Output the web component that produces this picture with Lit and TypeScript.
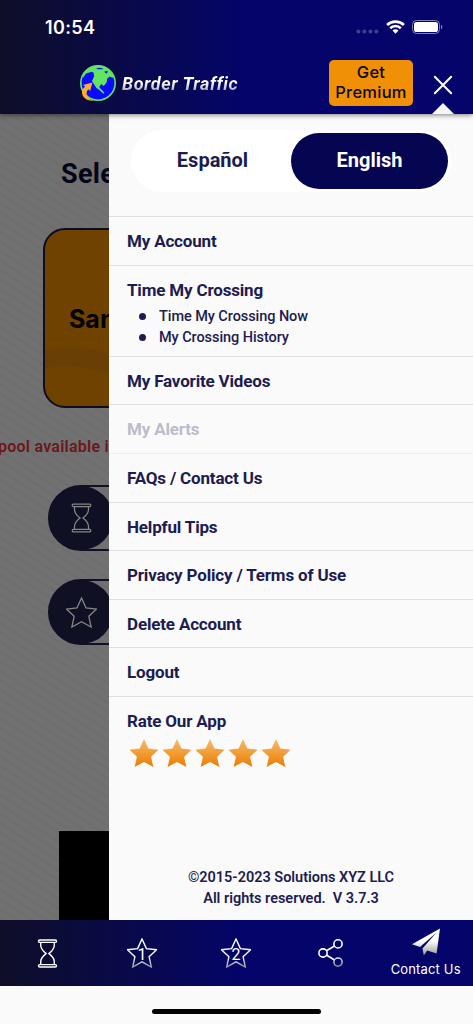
import { LitElement, html, css, svg } from "lit";
import { customElement } from "lit/decorators.js";
import { classMap } from "lit/directives/class-map.js";

const STAR = "M15 1 L19.4 10.6 L29.6 11.7 L22.1 18.7 L24.3 29 L15 23.9 L5.7 29 L7.9 18.7 L.4 11.7 L10.6 10.6 Z";

const hourglass = svg`
  <rect x="1" y="1" width="18" height="2.4" rx="1.2"></rect>
  <rect x="1" y="25.6" width="18" height="2.4" rx="1.2"></rect>
  <path d="M3.2 3.6V6C3.2 10.5 6 12.4 8.6 14.5C6 16.6 3.2 18.6 3.2 23V25.4M16.8 3.6V6C16.8 10.5 14 12.4 11.4 14.5C14 16.6 16.8 18.6 16.8 23V25.4"></path>`;

interface Entry { label: string; sub?: string[]; off?: boolean; }

const ENTRIES: Entry[] = [
  { label: "My Account" },
  { label: "Time My Crossing", sub: ["Time My Crossing Now", "My Crossing History"] },
  { label: "My Favorite Videos" },
  { label: "My Alerts", off: true },
  { label: "FAQs / Contact Us" },
  { label: "Helpful Tips" },
  { label: "Privacy Policy / Terms of Use" },
  { label: "Delete Account" },
  { label: "Logout" },
];

@customElement("app-header")
class AppHeader extends LitElement {
  static styles = css`
    :host { display: block; height: 114px; position: relative; z-index: 3; color: #fff;
      background: linear-gradient(90deg, #0e0e28 0, #04046a 245px);
      box-shadow: 0 1px 5px rgba(0,0,0,.5); }
    .status { display: flex; justify-content: space-between; height: 54px; padding: 0 30px 0 45px; }
    .time { font: 600 18px/55px Inter, sans-serif; letter-spacing: .35px; }
    .signals { display: flex; align-items: center; }
    .dots { margin: 9px 7px 0 0; }
    .wifi { margin-right: 7px; }
    .bar { display: flex; align-items: center; height: 60px; padding-left: 79px; }
    .globe { flex: none; margin: -2px 6px 0 0; }
    .brand { width: 207px; font: italic 700 18px/24px Roboto, sans-serif; letter-spacing: .53px; white-space: nowrap; }
    .brand span { background: linear-gradient(#fff 45%, #a9a9b4 85%); -webkit-background-clip: text; background-clip: text; color: transparent; padding-right: 3px; }
    .premium { flex: none; width: 84px; height: 46px; box-sizing: border-box; margin-top: -2px; padding: 0 0 1px; border: 0; border-radius: 5px; background: #f09006;
      color: #080808; font: 500 16.5px/19.5px Inter, sans-serif; letter-spacing: .25px; text-align: center; white-space: nowrap; }
    .actions { display: flex; align-items: center; height: 60px; }
    .close { position: relative; width: 24px; height: 60px; margin-left: 18px; flex: none; }
    .x { position: absolute; left: 2px; top: 21px; }
    .tip { position: absolute; left: 1px; bottom: 0; }
  `;
  render() {
    return html`
      <div class="status">
        <div class="time">10:54</div>
        <div class="signals">
          <svg class="dots" width="23" height="5" fill="#41418c"><circle cx="2.4" cy="2.5" r="2"/><circle cx="8.4" cy="2.5" r="2"/><circle cx="14.4" cy="2.5" r="2"/><circle cx="20.4" cy="2.5" r="2"/></svg>
          <svg class="wifi" width="19" height="14" viewBox="0 0 19 14" fill="none" stroke="#fff" stroke-width="2.6"><path d="M1.1 5A12.2 12.2 0 0 1 17.9 5M4.2 8.2A7.6 7.6 0 0 1 14.8 8.2"/><path d="M6.5 10.6A4.2 4.2 0 0 1 12.5 10.6L9.5 13.7Z" fill="#fff" stroke="none"/></svg>
          <svg width="31" height="14" viewBox="0 0 31 14"><rect x=".5" y=".5" width="27" height="13" rx="4" fill="none" stroke="#8080b4"/><rect x="2" y="2" width="24" height="10" rx="2.6" fill="#fff"/><path d="M29 4.8Q30.4 5.2 30.4 7T29 9.2Z" fill="#8080b4"/></svg>
        </div>
      </div>
      <div class="bar">
        <svg class="globe" width="37" height="38" viewBox="0 0 37 38">
          <circle cx="19" cy="19" r="17.2" fill="#0a0aff" stroke="#62e565" stroke-width="1.6"/>
          <path fill="#62e565" d="M4 14C4 8 9 3 14 2.2C20 1 26 2.5 30 5.5C33 8.5 35 12 34.5 14L30.5 12.5L28 15L27.8 18L24.8 22L22.2 20L20.2 23L21.6 24.8L23 26L25.5 29L24 29.6L20.5 26L17.5 24L15 20.2L13 17L15.2 12L14.4 8.5L12.8 7.8L7 9.5Z"/>
          <path fill="#0a0aff" d="M17 4.4L20 3.8L24 4.4V5.2L19 5.2ZM25.5 7.4L28.6 6.8L28.2 9.6L26.2 9Z"/>
          <path fill="#ffad27" d="M15 36.6C8 37.5 2.6 33 3 28C3.2 25.2 4.6 23.6 6.2 22.4L4 21L13.4 18.4L11.2 27L9.4 25.2C5.4 29 8.3 35.6 15 36.6Z"/>
        </svg>
        <div class="brand"><span>Border Traffic</span></div>
        <div class="actions">
          <button class="premium">Get<br>Premium</button>
          <div class="close">
            <svg class="x" width="20" height="20" viewBox="0 0 20 20" stroke="#fff" stroke-width="2" stroke-linecap="round"><path d="M1.8 1.8L18.2 18.2M18.2 1.8L1.8 18.2"/></svg>
            <svg class="tip" width="22" height="11"><path d="M0 11L11 0L22 11Z" fill="#f6f6f6"/></svg>
          </div>
        </div>
      </div>`;
  }
}

@customElement("crossing-page")
class CrossingPage extends LitElement {
  static styles = css`
    :host { display: block; overflow: hidden; width: 109px; height: 806px; color: #05051a;
      background: repeating-linear-gradient(213deg, #717171 0 4px, #6d6d6d 6px, #717171 8px); }
    .page { width: 473px; display: flex; flex-direction: column; }
    .title { margin: 43px 0 0 61px; font: 700 27px/34px Roboto, sans-serif; letter-spacing: .3px; }
    .card { margin: 37px 0 0 43px; width: 240px; height: 180px; box-sizing: border-box; border: 2px solid #0c0c26; border-radius: 22px; overflow: hidden; background: #6f4200; }
    .art { display: block; }
    .face { display: grid; }
    .face > * { grid-area: 1 / 1; }
    .name { padding: 73px 0 0 24px; font: 700 25px/32px Inter, sans-serif; color: #000; }
    .notice { margin: 29px 0 0 -2px; font: 600 16px/20px Roboto, sans-serif; letter-spacing: .25px; color: #6c171b; white-space: nowrap; }
    .pill { margin: 28px 0 0 48px; width: 300px; height: 66px; box-sizing: border-box; border: 2px solid #101025; border-radius: 33px; }
    .pill + .pill { margin-top: 28px; }
    .disc { width: 64px; height: 64px; margin: -1px; display: grid; place-items: center; border-radius: 50%; background: #101025; }
    .disc svg { fill: none; stroke: #858585; }
    .video { margin: 186px 0 0 59px; height: 90px; background: #000; }
  `;
  render() {
    return html`<div class="page">
      <div class="title">Select</div>
      <div class="card"><div class="face">
        <svg class="art" width="236" height="176"><path fill="#693f05" d="M0 120Q34 113 70 126Q95 137 120 160V178Q92 154 62 143Q28 132 0 138Z"/></svg>
        <div class="name">San Ysidro</div></div></div>
      <div class="notice">pool available in</div>
      <div class="pill"><div class="disc"><svg width="21" height="30" viewBox="0 0 20 29" stroke-width="1.2">${hourglass}</svg></div></div>
      <div class="pill"><div class="disc"><svg width="31" height="31" viewBox="0 0 30 30" stroke-width="1.3"><path d=${STAR}/></svg></div></div>
      <div class="video"></div>
    </div>`;
  }
}

@customElement("side-menu")
class SideMenu extends LitElement {
  static styles = css`
    :host { display: flex; flex-direction: column; box-sizing: border-box; height: 806px; background: #fafafa; color: #1c1c50; font-family: Roboto, sans-serif; }
    .lang { flex: none; display: grid; grid-template-columns: 1fr 157px; margin: 16px 22px 24px; height: 62px; box-sizing: border-box; padding: 3px; border-radius: 31px; background: #fff; font: 700 20px/54px Roboto, sans-serif; text-align: center; }
    .on { height: 56px; border-radius: 28px; background: #050552; color: #fff; }
    .row { flex: none; box-sizing: border-box; height: 48.65px; padding: 12px 0 0 18px; border-top: 1px solid #dedede; font: 700 17px/24px Roboto, sans-serif; letter-spacing: -.17px; white-space: nowrap; }
    .label { display: block; height: 24px; }
    .tall { height: 91px; }
    .off { color: #bcbccb; }
    .after { border-top-color: #eee; }
    .subs { margin: 4.5px 0 0; padding: 0 0 0 12px; list-style: none; font: 500 14.5px/21px Roboto, sans-serif; letter-spacing: -.07px; }
    .sub { display: flex; align-items: center; height: 21px; }
    .dot { width: 7px; height: 7px; border-radius: 50%; background: currentColor; margin-right: 13px; }
    .rate { height: auto; }
    .stars { display: flex; gap: 3px; margin: 5px 0 0 1.5px; }
    .legal { margin: auto 0 11px; text-align: center; font: 600 14.5px/21px Roboto, sans-serif; letter-spacing: -.02px; white-space: pre; }
  `;
  render() {
    return html`
      <div class="lang"><div>Español</div><div class="on">English</div></div>
      ${ENTRIES.map((e, i) => html`
        <div class=${classMap({ row: true, tall: !!e.sub, off: !!e.off, after: !!ENTRIES[i - 1]?.off })}>
          <span class="label">${e.label}</span>
          ${e.sub ? html`<ul class="subs">${e.sub.map((s) => html`<li class="sub"><span class="dot"></span><span>${s}</span></li>`)}</ul>` : null}
        </div>`)}
      <div class="row rate"><span class="label">Rate Our App</span>
        <div class="stars">${[0, 1, 2, 3, 4].map(() => html`<svg width="30" height="30" viewBox="0 0 30 30">
          <defs><linearGradient id="g" x2="0" y2="1"><stop offset=".05" stop-color="#f6b867"/><stop offset="1" stop-color="#ec7d00"/></linearGradient></defs>
          <path d=${STAR} fill="url(#g)"/></svg>`)}</div>
      </div>
      <div class="legal">©2015-2023 Solutions XYZ LLC
All rights reserved.  V 3.7.3</div>`;
  }
}

@customElement("tab-bar")
class TabBar extends LitElement {
  static styles = css`
    :host { display: grid; grid-template-columns: repeat(5, 1fr); height: 66px; background: linear-gradient(90deg, #0e0e28 0, #04046a 245px); }
    .tab { display: flex; flex-direction: column; align-items: center; justify-content: center; color: #fff; }
    .contact { justify-content: flex-start; padding-top: 8px; }
    .label { font: 400 13px/20px Inter, sans-serif; letter-spacing: .15px; margin-top: 3px; }
    .line { fill: none; stroke: #fff; }
    .num { fill: #fff; stroke: none; font: 400 16px Roboto, sans-serif; }
  `;
  star(n: number) {
    return html`<div class="tab"><svg class="line" width="30" height="30" viewBox="0 0 30 30" stroke-width="1.4">
      <defs><linearGradient id="s" x2="0" y2="1"><stop offset=".6" stop-color="#fff"/><stop offset="1" stop-color="#9a9aac"/></linearGradient></defs>
      <path stroke="url(#s)" d=${STAR}/><text class="num" x="15" y="21.5" text-anchor="middle">${n}</text></svg></div>`;
  }
  render() {
    return html`
      <div class="tab"><svg class="line" width="21" height="29" viewBox="0 0 20 29" stroke-width="1.4">${hourglass}</svg></div>
      ${this.star(1)}${this.star(2)}
      <div class="tab"><svg class="line" width="26" height="28" viewBox="0 0 26 28" stroke-width="1.6">
        <defs><linearGradient id="c" x2="0" y2="1"><stop stop-color="#ddd"/><stop offset="1" stop-color="#888"/></linearGradient></defs>
        <path d="M8.4 11.8L16.5 7M8.4 16L16.5 21"/><circle cx="5" cy="14" r="4.1"/><circle cx="20" cy="4.9" r="4.1"/><circle cx="20" cy="23.1" r="4.1" stroke="url(#c)"/></svg></div>
      <div class="tab contact"><svg width="28" height="28" viewBox="0 0 28 28">
        <defs><linearGradient id="p" x2="0" y2="1"><stop offset=".45" stop-color="#fff"/><stop offset="1" stop-color="#999"/></linearGradient></defs>
        <path fill="url(#p)" d="M28 .5L0 16.3L8 19L24.5 4.5L10.5 20.5L11.8 27.5L15.2 22.4L24.6 25.6Z"/></svg>
        <span class="label">Contact Us</span></div>`;
  }
}

@customElement("app-root")
class AppRoot extends LitElement {
  static styles = css`
    :host { display: block; width: 473px; height: 1024px; overflow: hidden; background: #fafafa; }
    .main { display: grid; grid-template-columns: 109px 364px; height: 806px; }
    .home { height: 38px; display: flex; justify-content: center; }
    .grip { width: 169px; height: 5px; margin-top: 23px; border-radius: 3px; background: #000; }
  `;
  render() {
    return html`<app-header></app-header>
      <div class="main"><crossing-page></crossing-page><side-menu></side-menu></div>
      <tab-bar></tab-bar>
      <div class="home"><div class="grip"></div></div>`;
  }
}
